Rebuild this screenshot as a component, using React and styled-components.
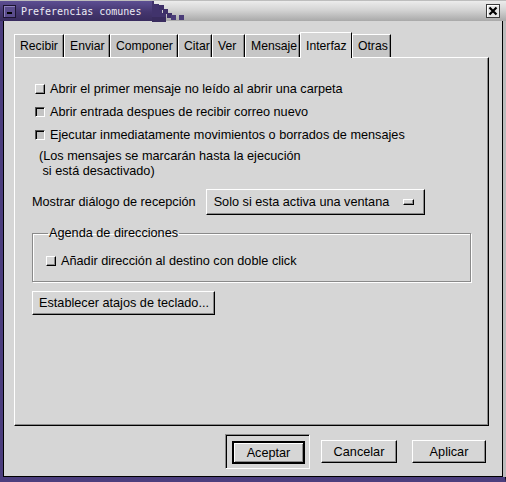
import React from 'react';
import styled, { createGlobalStyle } from 'styled-components';

//** GLOBAL **//

const GlobalStyle = createGlobalStyle`
  html, body {
    margin: 0;
    padding: 0;
    background: #d6d6d6;
  }
  body {
    font-family: "Liberation Sans", Arial, sans-serif;
    font-size: 12.7px;
    color: #000;
  }
`;

//** WINDOW FRAME **//

const Window = styled.div`
  width: 506px;
  height: 482px;
  display: flex;
  flex-direction: column;
  background: #d6d6d6;
  overflow: hidden;
`;

const TitleBar = styled.div`
  height: 21px;
  display: flex;
  align-items: center;
  background: linear-gradient(to bottom, #ececec 0%, #d4d4d4 45%, #a9a9a9 100%);
  border-top: 1px solid #bdbdbd;
  box-sizing: border-box;
`;

const TitleLeft = styled.div`
  height: 100%;
  display: flex;
  align-items: center;
  gap: 5px;
  padding-left: 3px;
  padding-right: 11px;
  background: linear-gradient(to bottom, #5d4f93 0%, #44366f 55%, #392c5e 100%);
`;

const IconButton = styled.div`
  width: 13px;
  height: 13px;
  box-sizing: border-box;
  background: #5a4c8c;
  border: 1px solid #1c1430;
  box-shadow: inset 1px 1px #8c80bc;
  display: flex;
  align-items: flex-end;
  justify-content: center;
  padding-bottom: 3px;
  &::after {
    content: '';
    width: 5px;
    height: 2px;
    background: #000;
  }
`;

const TitleText = styled.span`
  font-family: "DejaVu Sans Mono", "Liberation Mono", monospace;
  font-size: 10px;
  color: #ececf4;
  white-space: nowrap;
`;

const Steps = styled.svg`
  display: block;
  height: 21px;
  width: 40px;
  flex: none;
`;

const Spacer = styled.div`
  flex: 1;
`;

const CloseButton = styled.div`
  width: 14px;
  height: 14px;
  margin-right: 6px;
  box-sizing: border-box;
  background: #e6e6e6;
  border: 1px solid #3a3a3a;
  box-shadow: inset 1px 1px #fff;
  display: flex;
  align-items: center;
  justify-content: center;
`;

const Body = styled.div`
  flex: 1;
  display: flex;
  border-left: 3px solid #4c3e7e;
  border-bottom: 5px solid #4c3e7e;
  border-right: 1px solid #000;
  box-shadow: inset 0 -1px #000;
`;

const Client = styled.div`
  flex: 1;
  display: flex;
  flex-direction: column;
  border-left: 1px solid #000;
  border-bottom: 1px solid #000;
  border-right: 1px solid #000;
  margin-right: 2px;
  padding: 11px 13px 0 10px;
  box-shadow: 3px 0 0 #bcbcbc;
`;

//** NOTEBOOK **//

const TabRow = styled.div`
  display: flex;
  align-items: flex-end;
  height: 25px;
  position: relative;
  z-index: 1;
`;

const Tab = styled.div`
  width: ${p => p.w}px;
  height: ${p => (p.active ? '26px' : '23px')};
  margin-bottom: ${p => (p.active ? '-1px' : '0')};
  box-sizing: border-box;
  padding-left: 5px;
  display: flex;
  align-items: center;
  font-size: 12.2px;
  background: ${p => (p.active ? '#d6d6d6' : '#c6c6c6')};
  border-top: 1px solid #fff;
  border-left: 1px solid #fff;
  border-right: 1px solid #000;
  box-shadow: ${p => (p.active ? 'none' : 'inset -1px 0 #8a8a8a')};
  white-space: nowrap;
`;

const Panel = styled.div`
  height: 369px;
  box-sizing: border-box;
  border-top: 1px solid #fff;
  border-left: 1px solid #fff;
  border-right: 1px solid #000;
  border-bottom: 1px solid #000;
  box-shadow: inset -1px -1px #8a8a8a;
  padding: 19px 0 0 17px;
  display: flex;
  flex-direction: column;
  align-items: flex-start;
`;

//** CONTROLS **//

const CheckRow = styled.label`
  height: 23px;
  display: flex;
  align-items: center;
  gap: 5px;
  margin-left: 3px;
  white-space: nowrap;
`;

const CheckBox = styled.span`
  width: 10px;
  height: 10px;
  box-sizing: border-box;
  flex: none;
  background: ${p => (p.checked ? '#c4c4c4' : '#d6d6d6')};
  border-top: 1px solid ${p => (p.checked ? '#555' : '#fff')};
  border-left: 1px solid ${p => (p.checked ? '#555' : '#fff')};
  border-bottom: 1px solid ${p => (p.checked ? '#fff' : '#000')};
  border-right: 1px solid ${p => (p.checked ? '#fff' : '#000')};
  box-shadow: ${p => (p.checked ? 'inset 1px 1px #000' : 'inset -1px -1px #8a8a8a')};
`;

const Note = styled.div`
  margin-top: 3px;
  margin-left: 7px;
  line-height: 15px;
  white-space: pre;
`;

const MenuRow = styled.div`
  display: flex;
  align-items: center;
  gap: 10px;
  margin-top: 10px;
`;

const RaisedButton = styled.button`
  font-family: "Liberation Sans", Arial, sans-serif;
  font-size: 12.7px;
  color: #000;
  background: #d6d6d6;
  box-sizing: border-box;
  height: ${p => p.h || 23}px;
  width: ${p => (p.w ? `${p.w}px` : 'auto')};
  padding: 0 6px;
  border-top: 1px solid #fff;
  border-left: 1px solid #fff;
  border-right: 1px solid #000;
  border-bottom: 1px solid #000;
  box-shadow: inset -1px -1px #8a8a8a;
  display: flex;
  align-items: center;
  justify-content: ${p => p.align || 'center'};
  white-space: nowrap;
  cursor: default;
`;

const OptionMenu = styled(RaisedButton)`
  justify-content: space-between;
  padding: 0 10px 0 7px;
`;

const OptionIndicator = styled.span`
  width: 11px;
  height: 6px;
  box-sizing: border-box;
  border-top: 1px solid #fff;
  border-left: 1px solid #fff;
  border-right: 1px solid #000;
  border-bottom: 1px solid #000;
  box-shadow: inset -1px -1px #8a8a8a;
`;

const Group = styled.fieldset`
  margin: 11px 0 0 0;
  width: 439px;
  height: 56px;
  box-sizing: border-box;
  padding: 9px 0 0 10px;
  border: 1px solid #8a8a8a;
  box-shadow: inset 1px 1px #fff, 1px 1px #fff;
`;

const GroupLabel = styled.legend`
  padding: 0 1px;
  margin-left: 5px;
  line-height: 14px;
`;

const ShortcutButton = styled(RaisedButton)`
  margin-top: 9px;
`;

const ButtonBar = styled.div`
  display: flex;
  align-items: center;
  justify-content: flex-end;
  margin-top: 8px;
  padding-right: 3px;
`;

const DefaultFrame = styled.div`
  box-sizing: border-box;
  width: 85px;
  height: 35px;
  padding: 6px 5px 4px 6px;
  border-top: 1px solid #8a8a8a;
  border-left: 1px solid #8a8a8a;
  border-right: 1px solid #fff;
  border-bottom: 1px solid #fff;
  box-shadow: inset 1px 1px #000;
  margin-right: 11px;
`;

const DefaultButton = styled(RaisedButton)`
  border: 2px solid #000;
  box-shadow: inset 1px 1px #fff, inset -1px -1px #8a8a8a;
`;

const GapButton = styled(RaisedButton)`
  margin-right: 15px;
`;

const tabs = [
    ['Recibir', 50], ['Enviar', 46], ['Componer', 68], ['Citar', 34],
    ['Ver', 33], ['Mensaje', 55], ['Interfaz', 52], ['Otras', 39],
];

export default function App() {
    return (
        <Window>
            <GlobalStyle />
            <TitleBar>
                <TitleLeft>
                    <IconButton />
                    <TitleText>Preferencias comunes</TitleText>
                </TitleLeft>
                <Steps viewBox="0 0 40 21">
                    <path d="M0 0 H2 V3 H7 V8 H10 V12 H14 V16 H0 Z" fill="#41336c" />
                    <path d="M0 16 H14 V21 H0 Z" fill="#392c5e" />
                    <rect x="7" y="4" width="5" height="5" fill="#3e3068" />
                    <rect x="11" y="8" width="5" height="5" fill="#3e3068" />
                    <rect x="15" y="12" width="5" height="5" fill="#3e3068" />
                    <rect x="19" y="14" width="5" height="5" fill="#4a3c78" />
                    <rect x="27" y="14" width="5" height="5" fill="#4a3c78" />
                </Steps>
                <Spacer />
                <CloseButton>
                    <svg width="10" height="10" viewBox="0 0 10 10">
                        <path d="M1.5 1.5 L8.5 8.5 M8.5 1.5 L1.5 8.5" stroke="#000" strokeWidth="2.2" />
                    </svg>
                </CloseButton>
            </TitleBar>
            <Body>
                <Client>
                    <TabRow>
                        {tabs.map(([t, w]) => (
                            <Tab key={t} w={w} active={t === 'Interfaz'}>{t}</Tab>
                        ))}
                    </TabRow>
                    <Panel>
                        <CheckRow>
                            <CheckBox />
                            Abrir el primer mensaje no leído al abrir una carpeta
                        </CheckRow>
                        <CheckRow>
                            <CheckBox checked />
                            Abrir entrada despues de recibir correo nuevo
                        </CheckRow>
                        <CheckRow>
                            <CheckBox checked />
                            Ejecutar inmediatamente movimientos o borrados de mensajes
                        </CheckRow>
                        <Note>{'(Los mensajes se marcarán hasta la ejecución\n si está desactivado)'}</Note>
                        <MenuRow>
                            <span>Mostrar diálogo de recepción</span>
                            <OptionMenu as="div" h={26} w={219}>
                                Solo si esta activa una ventana
                                <OptionIndicator />
                            </OptionMenu>
                        </MenuRow>
                        <Group>
                            <GroupLabel>Agenda de direcciones</GroupLabel>
                            <CheckRow>
                                <CheckBox />
                                Añadir dirección al destino con doble click
                            </CheckRow>
                        </Group>
                        <ShortcutButton w={183} h={24} align="flex-start">
                            Establecer atajos de teclado...
                        </ShortcutButton>
                    </Panel>
                    <ButtonBar>
                        <DefaultFrame>
                            <DefaultButton w={73} h={23}>Aceptar</DefaultButton>
                        </DefaultFrame>
                        <GapButton w={76} h={23}>Cancelar</GapButton>
                        <RaisedButton w={74} h={23}>Aplicar</RaisedButton>
                    </ButtonBar>
                </Client>
            </Body>
        </Window>
    );
}
